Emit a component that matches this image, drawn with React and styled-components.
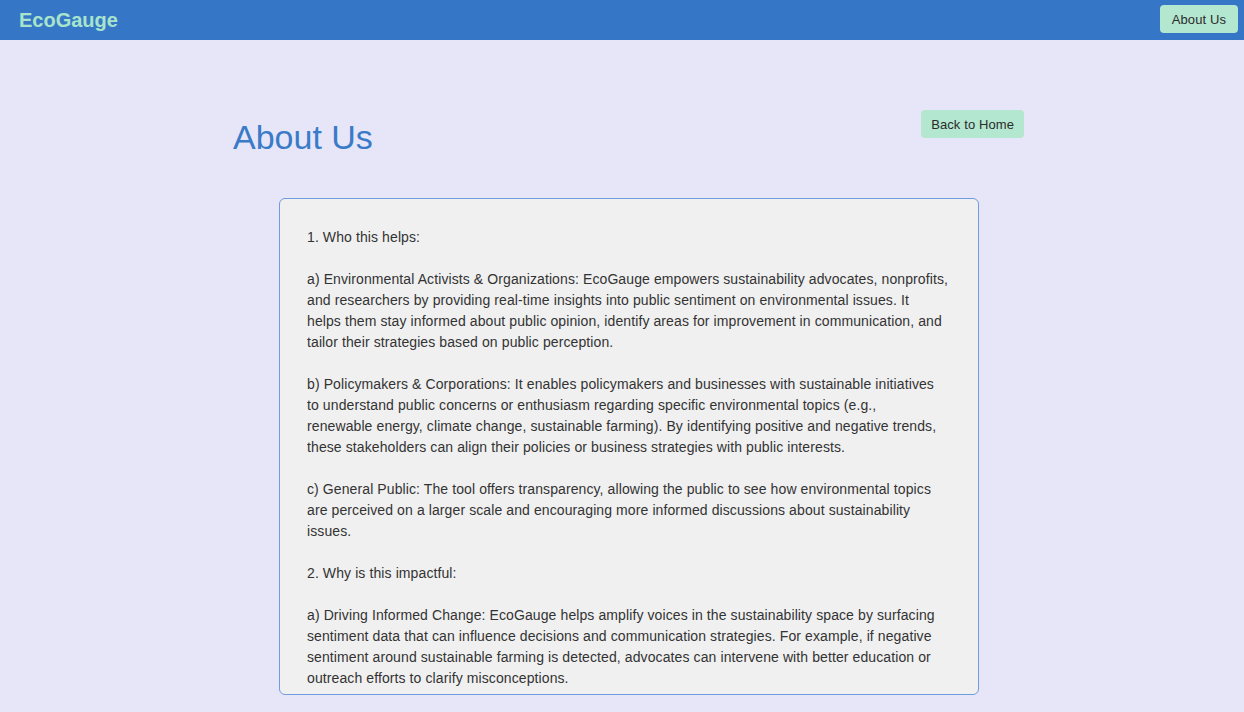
import React from "react";
import styled, { createGlobalStyle } from "styled-components";

const GlobalStyle = createGlobalStyle`
  html, body {
    margin: 0;
    padding: 0;
    background-color: #e7e6f8;
    font-family: "Liberation Sans", Arial, sans-serif;
  }
`;

const Page = styled.div`
  min-height: 100vh;
  background-color: #e7e6f8;
`;

const Navbar = styled.header`
  display: flex;
  align-items: center;
  justify-content: space-between;
  height: 40px;
  padding: 0 6px 0 19px;
  background-color: #3577c6;
  box-sizing: border-box;
`;

const Logo = styled.div`
  font-size: 20px;
  font-weight: 700;
  color: #a8e4cc;
`;

const NavButton = styled.button`
  height: 28px;
  margin-top: -2px;
  padding: 0 12px;
  border: none;
  border-radius: 4px;
  background-color: #b4e7d0;
  color: #2b2b2b;
  font-family: inherit;
  font-size: 13px;
  letter-spacing: 0.1px;
  cursor: pointer;
`;

const Content = styled.main`
  width: 804px;
  margin: 0 auto;
  padding-top: 70px;
`;

const TitleRow = styled.div`
  display: flex;
  align-items: flex-start;
  justify-content: space-between;
`;

const Title = styled.h1`
  margin: 8px 0 0 13px;
  font-size: 34px;
  font-weight: 400;
  color: #3a7bc8;
`;

const BackButton = styled.button`
  height: 28px;
  padding: 0 10px;
  border: none;
  border-radius: 4px;
  background-color: #b4e7d0;
  color: #2b2b2b;
  font-family: inherit;
  font-size: 13px;
  letter-spacing: 0.1px;
  cursor: pointer;
`;

const Card = styled.section`
  width: 700px;
  height: 497px;
  margin: 41px 0 0 59px;
  padding: 28px 20px 0 27px;
  box-sizing: border-box;
  background-color: #f0f0f0;
  border: 1px solid #6f9be0;
  border-radius: 6px;
`;

const Scroll = styled.div`
  height: 462px;
  overflow: hidden;
`;

const Para = styled.p`
  margin: 0 0 21px 0;
  font-size: 14px;
  line-height: 21px;
  letter-spacing: 0.1px;
  white-space: nowrap;
  color: #333333;
  &:last-child {
    margin-bottom: 0;
  }
`;

const paragraphs = [
  ["1. Who this helps:"],
  [
    "a) Environmental Activists & Organizations: EcoGauge empowers sustainability advocates, nonprofits,",
    "and researchers by providing real-time insights into public sentiment on environmental issues. It",
    "helps them stay informed about public opinion, identify areas for improvement in communication, and",
    "tailor their strategies based on public perception.",
  ],
  [
    "b) Policymakers & Corporations: It enables policymakers and businesses with sustainable initiatives",
    "to understand public concerns or enthusiasm regarding specific environmental topics (e.g.,",
    "renewable energy, climate change, sustainable farming). By identifying positive and negative trends,",
    "these stakeholders can align their policies or business strategies with public interests.",
  ],
  [
    "c) General Public: The tool offers transparency, allowing the public to see how environmental topics",
    "are perceived on a larger scale and encouraging more informed discussions about sustainability",
    "issues.",
  ],
  ["2. Why is this impactful:"],
  [
    "a) Driving Informed Change: EcoGauge helps amplify voices in the sustainability space by surfacing",
    "sentiment data that can influence decisions and communication strategies. For example, if negative",
    "sentiment around sustainable farming is detected, advocates can intervene with better education or",
    "outreach efforts to clarify misconceptions.",
  ],
];

export default function App() {
  return (
    <Page>
      <GlobalStyle />
      <Navbar>
        <Logo>EcoGauge</Logo>
        <NavButton>About Us</NavButton>
      </Navbar>
      <Content>
        <TitleRow>
          <Title>About Us</Title>
          <BackButton>Back to Home</BackButton>
        </TitleRow>
        <Card>
          <Scroll>
            {paragraphs.map((lines, i) => (
              <Para key={i}>
                {lines.map((line, j) => (
                  <React.Fragment key={j}>
                    {j > 0 && <br />}
                    {line}
                  </React.Fragment>
                ))}
              </Para>
            ))}
          </Scroll>
        </Card>
      </Content>
    </Page>
  );
}
